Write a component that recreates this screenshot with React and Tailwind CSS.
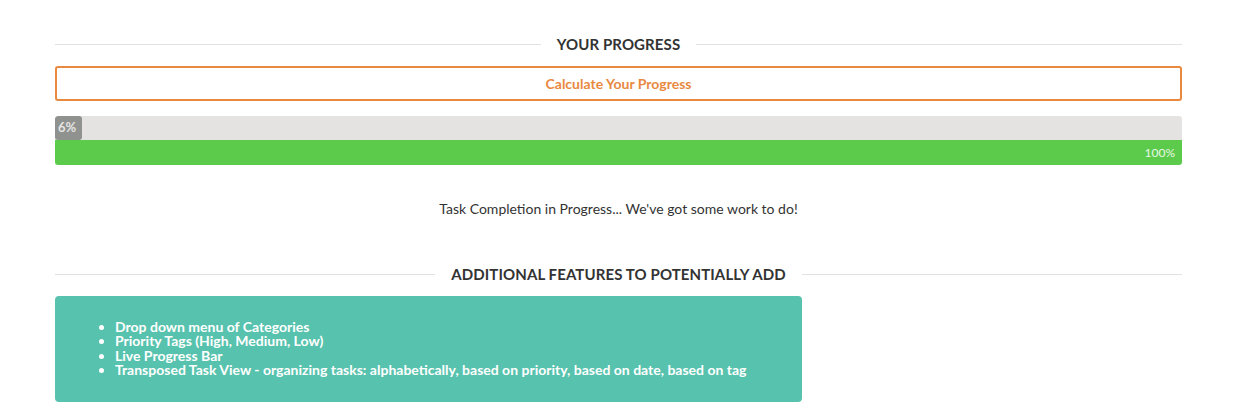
const features = [
  'Drop down menu of Categories',
  'Priority Tags (High, Medium, Low)',
  'Live Progress Bar',
  'Transposed Task View - organizing tasks: alphabetically, based on priority, based on date, based on tag',
];

const SectionTitle = ({ children }) => (
  <div className="flex items-center gap-4">
    <div className="flex-1 h-px bg-[#e2e2e2]" />
    <h2 className="text-[15px] font-bold tracking-[0.1px] text-[#333] leading-none">{children}</h2>
    <div className="flex-1 h-px bg-[#e2e2e2]" />
  </div>
);

export default function App() {
  const done = 6;
  return (
    <div className="w-[1253px] h-[410px] bg-white overflow-hidden font-['Lato','Liberation_Sans',sans-serif]">
      <div className="mx-[55px] w-[1127px] pt-[37px]">
        <SectionTitle>YOUR PROGRESS</SectionTitle>

        <button className="mt-[14px] w-full h-[35px] border-2 border-[#e8893f] rounded-[3px] text-[14px] font-bold text-[#e8893f] bg-white">
          Calculate Your Progress
        </button>

        <div className="mt-[15px] rounded-[3px] overflow-hidden">
          <div className="h-[24px] bg-[#e4e3e1] flex">
            <div
              className="h-full bg-[#8f928e] rounded-[3px] text-[13px] font-bold text-[#e6e6e6] flex items-center pl-[3px]"
              style={{ width: '27px' }}
            >
              {done}%
            </div>
          </div>
          <div className="h-[25px] bg-[#5ccb4c] flex items-center justify-end pr-[7px] text-[12px] text-[#e8f8e4]">
            100%
          </div>
        </div>

        <p className="mt-[33px] text-center text-[14px] text-[#333]">
          Task Completion in Progress... We've got some work to do!
        </p>

        <div className="mt-[48px]">
          <SectionTitle>ADDITIONAL FEATURES TO POTENTIALLY ADD</SectionTitle>
        </div>

        <div className="mt-[14px] w-[747px] h-[106px] bg-[#57c2ad] rounded-[4px] pl-[20px] pt-[24px]">
          <ul className="list-disc pl-[40px] text-[14px] leading-[14.3px] font-bold text-white">
            {features.map((f) => (
              <li key={f}>{f}</li>
            ))}
          </ul>
        </div>
      </div>
    </div>
  );
}
